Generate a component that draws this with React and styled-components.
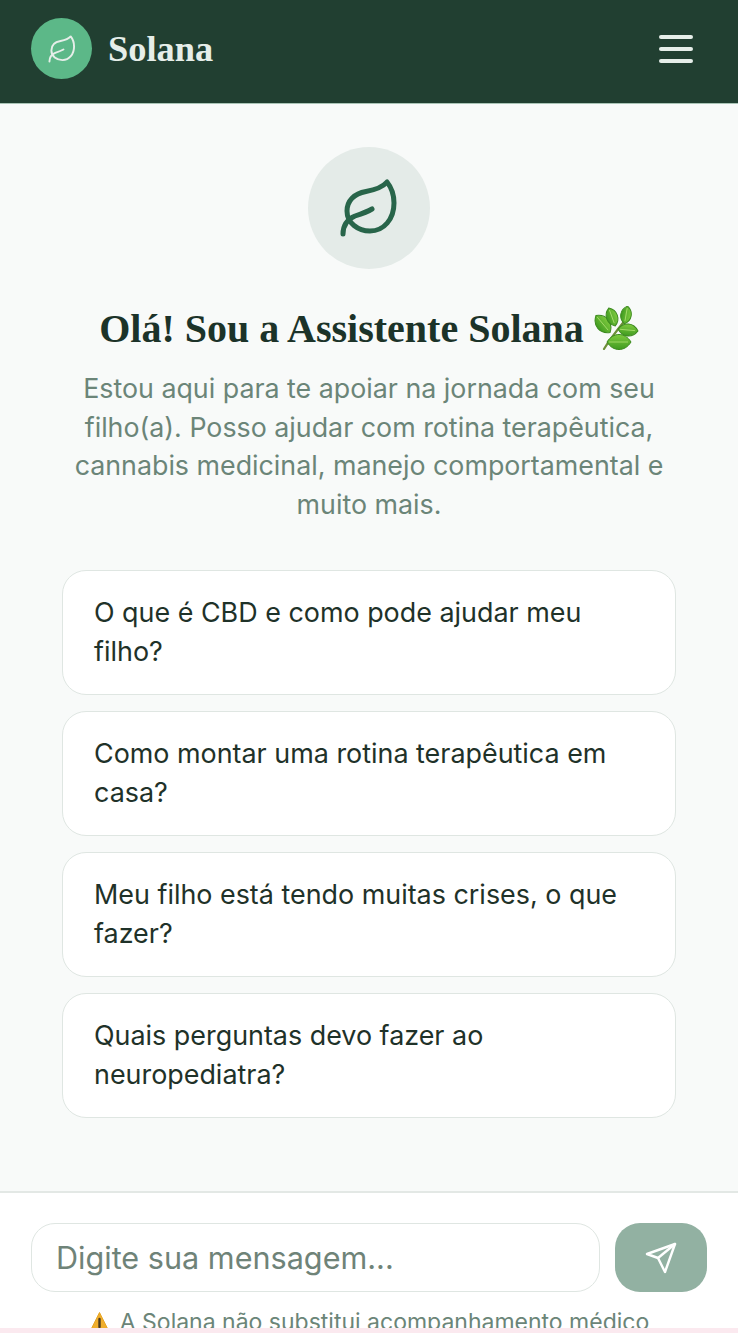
import React from "react";
import styled, { createGlobalStyle } from "styled-components";

const GlobalStyle = createGlobalStyle`
  html, body {
    margin: 0;
    padding: 0;
    background: #f8faf9;
  }
  * {
    box-sizing: border-box;
  }
`;

const Page = styled.div`
  width: 738px;
  height: 1333px;
  display: flex;
  flex-direction: column;
  overflow: hidden;
  position: relative;
  font-family: Inter, "Liberation Sans", sans-serif;
  background: #f8faf9;
`;

const Header = styled.header`
  height: 104px;
  flex: none;
  background: #213f31;
  border-bottom: 1px solid #a9c4b6;
  display: flex;
  align-items: center;
  justify-content: space-between;
  padding: 0 45px 6px 31px;
`;

const Brand = styled.div`
  display: flex;
  align-items: center;
  gap: 16px;
`;

const LogoCircle = styled.div`
  width: 61px;
  height: 61px;
  border-radius: 50%;
  background: #5cb888;
  display: flex;
  align-items: center;
  justify-content: center;
`;

const BrandName = styled.span`
  font-family: "Liberation Serif", serif;
  font-weight: 700;
  font-size: 36.4px;
  color: #e6eee9;
`;

const MenuButton = styled.div`
  width: 34px;
  display: flex;
  flex-direction: column;
  gap: 8px;
`;

const MenuBar = styled.span`
  display: block;
  height: 4px;
  border-radius: 2px;
  background: #e6eee9;
`;

const Main = styled.main`
  flex: 1;
  display: flex;
  flex-direction: column;
  align-items: center;
  padding-top: 43px;
`;

const HeroCircle = styled.div`
  width: 122px;
  height: 122px;
  border-radius: 50%;
  background: #e4ebe8;
  display: flex;
  align-items: center;
  justify-content: center;
`;

const Title = styled.h1`
  margin: 34px 0 0;
  display: flex;
  align-items: center;
  gap: 9px;
  height: 50px;
  font-family: "Liberation Serif", serif;
  font-weight: 700;
  font-size: 40px;
  color: #1c3329;
`;

const Intro = styled.p`
  margin: 16px 0 0;
  width: 620px;
  text-align: center;
  font-size: 26.8px;
  line-height: 38.5px;
  color: #6b8578;
`;

const Suggestions = styled.div`
  margin-top: 47px;
  width: 614px;
  display: flex;
  flex-direction: column;
  gap: 16px;
`;

const Suggestion = styled.div`
  height: 125px;
  padding: 22px 31px;
  background: #ffffff;
  border: 1px solid #dfe6e2;
  border-radius: 24px;
  font-size: 26.9px;
  line-height: 39px;
  color: #1f3229;
`;

const Composer = styled.footer`
  flex: none;
  height: 142px;
  background: #ffffff;
  border-top: 2px solid #e3e8e5;
  padding: 30px 31px 0;
`;

const InputRow = styled.div`
  display: flex;
  gap: 15px;
`;

const Input = styled.div`
  flex: 1;
  height: 69px;
  display: flex;
  align-items: center;
  padding: 0 24px;
  background: #ffffff;
  border: 1px solid #dfe6e2;
  border-radius: 24px;
  font-size: 30.6px;
  color: #6f8378;
`;

const SendButton = styled.div`
  width: 92px;
  height: 69px;
  flex: none;
  border-radius: 25px;
  background: #92b1a2;
  display: flex;
  align-items: center;
  justify-content: center;
`;

const Disclaimer = styled.div`
  margin-top: 15px;
  display: flex;
  justify-content: center;
  align-items: center;
  gap: 10px;
  font-size: 23px;
  line-height: 30px;
  color: #6b8578;
  white-space: nowrap;
`;

const PinkStrip = styled.div`
  position: absolute;
  left: 0;
  right: 0;
  bottom: 0;
  height: 5px;
  background: #fbe9ef;
`;

function LeafIcon({ size, color, width }) {
  return (
    <svg width={size} height={size} viewBox="0 0 58 58" fill="none" stroke={color} strokeWidth={width} strokeLinecap="round" strokeLinejoin="round">
      <path d="M47 3C42 9 34 11 26 12.5C14 14.5 7 22 7 32C7 44 18 52 30 52C44 52 54 40 54 24C54 15 51 8 47 3Z" />
      <path d="M3 55C3 46 8 40 15 37C21 35 27 33 32 30" />
    </svg>
  );
}

function SendIcon() {
  return (
    <svg width="32" height="32" viewBox="0 0 32 32" fill="none" stroke="#ffffff" strokeWidth="2.4" strokeLinecap="round" strokeLinejoin="round">
      <path d="M30 2 2 12l11 4 7 14Z" />
      <path d="M30 2 13 16" />
    </svg>
  );
}

// one pointed leaf, drawn around 0,0 along the x axis
function HerbLeaf({ x, y, length, spread, angle }) {
  const half = length / 2;
  return (
    <g transform={`translate(${x} ${y}) rotate(${angle})`}>
      <path
        d={`M${-half} 0C${-half / 2} ${-spread} ${half / 2} ${-spread} ${half} 0C${half / 2} ${spread} ${-half / 2} ${spread} ${-half} 0Z`}
        fill="url(#herbLeaf)"
        stroke="#3c8a1e"
        strokeWidth="1"
      />
      <path d={`M${-half + 2} 0H${half - 3}`} stroke="#a5dc6a" strokeWidth="0.9" />
    </g>
  );
}

function HerbIcon() {
  return (
    <svg width="46" height="44" viewBox="0 0 46 44">
      <defs>
        <linearGradient id="herbLeaf" x1="0" y1="0" x2="0" y2="1">
          <stop offset="0" stopColor="#7fcb3f" />
          <stop offset="1" stopColor="#3f9a20" />
        </linearGradient>
      </defs>
      <path d="M11 43C17 33 25 23 33 13" stroke="#6d8f3a" strokeWidth="2.2" fill="none" strokeLinecap="round" />
      <HerbLeaf x={10} y={18} length={22} spread={9} angle={50} />
      <HerbLeaf x={19} y={11} length={19} spread={7.5} angle={70} />
      <HerbLeaf x={33} y={9} length={18} spread={7} angle={100} />
      <HerbLeaf x={35} y={24} length={20} spread={8} angle={5} />
      <HerbLeaf x={26} y={36} length={24} spread={10} angle={0} />
    </svg>
  );
}

function WarningIcon() {
  return (
    <svg width="21" height="24" viewBox="0 0 21 24">
      <path d="M10.5 2.5 20 21.5H1Z" fill="#f0ae2c" stroke="#e6a526" strokeLinejoin="round" />
      <path d="M10.5 9v8" stroke="#4a3a20" strokeWidth="2.4" strokeLinecap="round" />
    </svg>
  );
}

const suggestions = [
  "O que é CBD e como pode ajudar meu filho?",
  "Como montar uma rotina terapêutica em casa?",
  "Meu filho está tendo muitas crises, o que fazer?",
  "Quais perguntas devo fazer ao neuropediatra?",
];

export default function App() {
  return (
    <Page>
      <GlobalStyle />
      <Header>
        <Brand>
          <LogoCircle>
            <LeafIcon size={28} color="#e6eee9" width={4} />
          </LogoCircle>
          <BrandName>Solana</BrandName>
        </Brand>
        <MenuButton>
          <MenuBar />
          <MenuBar />
          <MenuBar />
        </MenuButton>
      </Header>
      <Main>
        <HeroCircle>
          <LeafIcon size={58} color="#28654a" width={5} />
        </HeroCircle>
        <Title>
          Olá! Sou a Assistente Solana <HerbIcon />
        </Title>
        <Intro>
          Estou aqui para te apoiar na jornada com seu filho(a). Posso ajudar com rotina terapêutica, cannabis medicinal, manejo comportamental e muito mais.
        </Intro>
        <Suggestions>
          {suggestions.map((text) => (
            <Suggestion key={text}>{text}</Suggestion>
          ))}
        </Suggestions>
      </Main>
      <Composer>
        <InputRow>
          <Input>Digite sua mensagem...</Input>
          <SendButton>
            <SendIcon />
          </SendButton>
        </InputRow>
        <Disclaimer>
          <WarningIcon />
          A Solana não substitui acompanhamento médico
        </Disclaimer>
      </Composer>
      <PinkStrip />
    </Page>
  );
}
